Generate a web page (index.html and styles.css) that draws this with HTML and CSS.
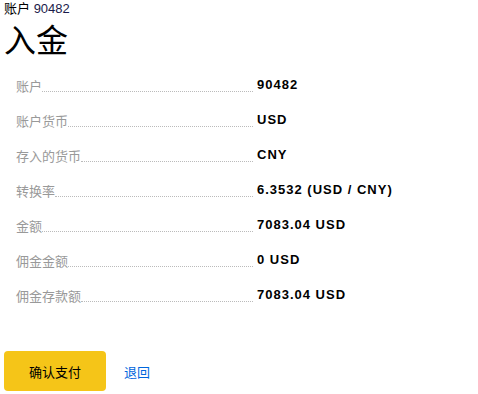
FILE: index.html
```html
<!DOCTYPE html>
<html lang="zh-CN">
<head>
    <meta charset="UTF-8">
    <meta name="viewport" content="width=device-width, initial-scale=1.0">
    <title>入金</title>
    <link rel="stylesheet" href="styles.css">
</head>
<body>
    <div class="account-line">账户 <span class="account-no">90482</span></div>
    <h1>入金</h1>
    <div class="details">
        <div class="row">
            <div class="label-wrap"><span class="label">账户</span><span class="dots"></span></div>
            <span class="value">90482</span>
        </div>
        <div class="row">
            <div class="label-wrap"><span class="label">账户货币</span><span class="dots"></span></div>
            <span class="value">USD</span>
        </div>
        <div class="row">
            <div class="label-wrap"><span class="label">存入的货币</span><span class="dots"></span></div>
            <span class="value">CNY</span>
        </div>
        <div class="row">
            <div class="label-wrap"><span class="label">转换率</span><span class="dots"></span></div>
            <span class="value">6.3532 (USD / CNY)</span>
        </div>
        <div class="row">
            <div class="label-wrap"><span class="label">金额</span><span class="dots"></span></div>
            <span class="value">7083.04 USD</span>
        </div>
        <div class="row">
            <div class="label-wrap"><span class="label">佣金金额</span><span class="dots"></span></div>
            <span class="value">0 USD</span>
        </div>
        <div class="row">
            <div class="label-wrap"><span class="label">佣金存款额</span><span class="dots"></span></div>
            <span class="value">7083.04 USD</span>
        </div>
    </div>
    <div class="actions">
        <button class="btn-confirm">确认支付</button>
        <a href="#" class="back-link">退回</a>
    </div>
</body>
</html>
```

FILE: styles.css
```css
body {
    margin: 0;
    padding: 1px 4px;
    font-family: "Liberation Sans", "Noto Sans CJK SC", sans-serif;
    font-size: 13px;
    color: #000;
    background: #fff;
}
.account-line {
    line-height: 16px;
}
.account-no {
    color: #1a1a4a;
}
h1 {
    font-family: "Liberation Serif", "Noto Sans CJK SC", serif;
    font-size: 32px;
    font-weight: normal;
    margin: 4px 0 0 0;
    line-height: 40px;
}
.details {
    margin-top: 0;
    padding-left: 12px;
}
.row {
    display: flex;
    align-items: flex-end;
    height: 35px;
}
.label-wrap {
    width: 237px;
    display: flex;
    align-items: flex-end;
}
.label {
    color: #999;
    font-size: 13px;
    line-height: 18px;
}
.dots {
    flex: 1;
    border-bottom: 1px dotted #bbb;
    margin-bottom: 4px;
}
.value {
    margin-left: 4px;
    font-weight: bold;
    font-size: 13px;
    letter-spacing: 1px;
    line-height: 18px;
    position: relative;
    top: -2px;
}
.actions {
    display: flex;
    align-items: center;
    margin-top: 45px;
}
.btn-confirm {
    width: 102px;
    height: 40px;
    background: #f5c518;
    border: none;
    border-radius: 4px;
    font-family: "Noto Sans CJK SC", sans-serif;
    font-size: 13px;
    color: #000;
    cursor: pointer;
}
.back-link {
    margin-left: 18px;
    color: #0066dd;
    text-decoration: none;
    font-size: 13px;
}
```
